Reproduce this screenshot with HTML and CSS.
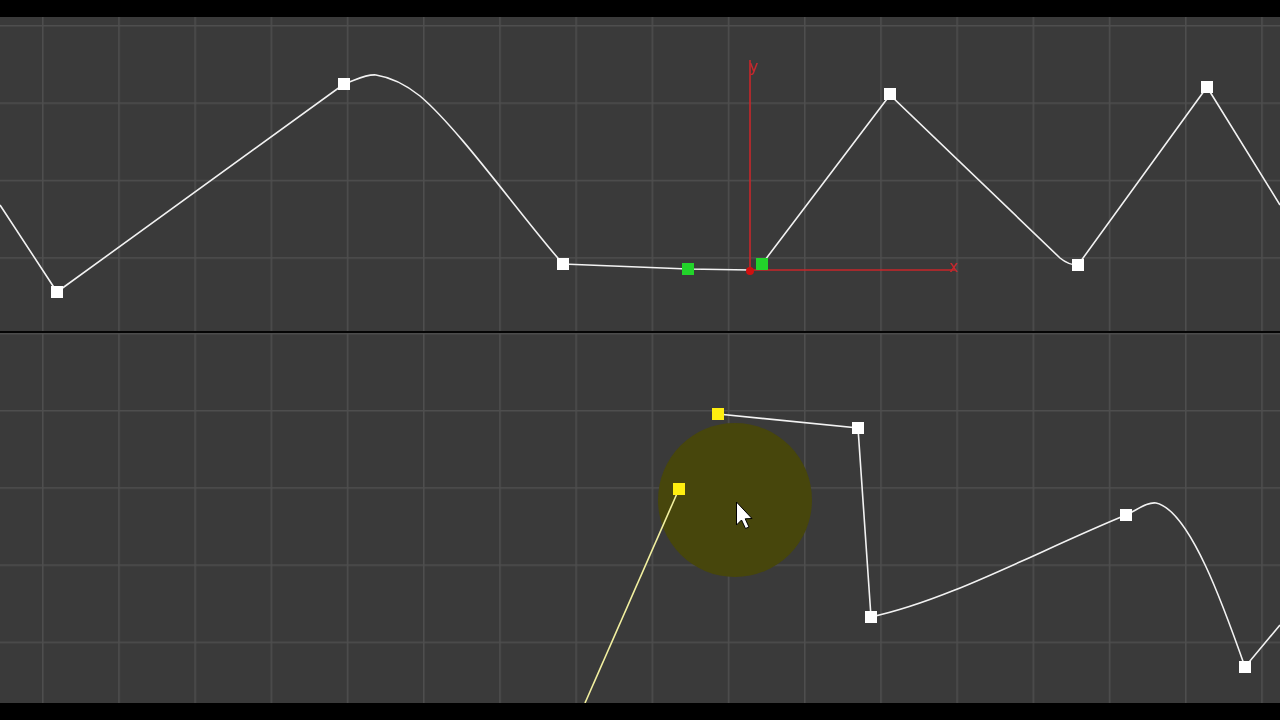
FILE: index.html
```html
<!DOCTYPE html>
<html>
<head>
<meta charset="utf-8">
<link rel="stylesheet" href="styles.css">
</head>
<body>
<div class="screen">
  <div class="bar-top"></div>
  <div class="viewport vp-top">
    <svg class="canvas" width="1280" height="314" viewBox="0 17 1280 314">
      <defs>
        <pattern id="gridA" x="42" y="25" width="76.2" height="77.4" patternUnits="userSpaceOnUse">
          <path d="M0.5 0 V77.4 M0 0.5 H76.2" stroke="#4e4e4e" stroke-width="2" fill="none"/>
        </pattern>
      </defs>
      <rect x="0" y="17" width="1280" height="314" fill="url(#gridA)"/>
      <path class="curve" d="M0 205 L57 292 L344 84 C356 80 366 74 376 75 C395 78 410 88 420 96 C460 130 520 215 563 264 L688 269 L750 270 M762 264 L890 95 L1060 258 C1066 263 1072 265 1078 265 L1207 87 L1280 205"/>
      <line class="axis" x1="750" y1="60" x2="750" y2="270"/>
      <line class="axis" x1="750" y1="270" x2="955" y2="270"/>
      <text class="axis-label" x="749" y="72">y</text>
      <text class="axis-label" x="949" y="272">x</text>
      <circle cx="750" cy="271" r="4" fill="#d01010"/>
      <rect class="key" x="51" y="286" width="12" height="12"/>
      <rect class="key" x="338" y="78" width="12" height="12"/>
      <rect class="key" x="557" y="258" width="12" height="12"/>
      <rect class="key" x="884" y="88" width="12" height="12"/>
      <rect class="key" x="1072" y="259" width="12" height="12"/>
      <rect class="key" x="1201" y="81" width="12" height="12"/>
      <rect class="handle" x="682" y="263" width="12" height="12"/>
      <rect class="handle" x="756" y="258" width="12" height="12"/>
    </svg>
  </div>
  <div class="divider"></div>
  <div class="viewport vp-bottom">
    <svg class="canvas" width="1280" height="370" viewBox="0 333 1280 370">
      <defs>
        <pattern id="gridB" x="42" y="410" width="76.2" height="77.2" patternUnits="userSpaceOnUse">
          <path d="M0.5 0 V77.2 M0 0.5 H76.2" stroke="#4e4e4e" stroke-width="2" fill="none"/>
        </pattern>
      </defs>
      <rect x="0" y="333" width="1280" height="370" fill="url(#gridB)"/>
      <circle cx="735" cy="500" r="77" fill="#47460c"/>
      <path class="curve-yellow" d="M585 703 L679 489"/>
      <path class="curve" d="M718 414 L858 428 L871 617 C950 600 1040 550 1126 515 C1140 508 1148 502 1156 503 C1190 510 1225 610 1245 667 L1280 625"/>
      <rect class="sel" x="712" y="408" width="12" height="12"/>
      <rect class="sel" x="673" y="483" width="12" height="12"/>
      <rect class="key" x="852" y="422" width="12" height="12"/>
      <rect class="key" x="865" y="611" width="12" height="12"/>
      <rect class="key" x="1120" y="509" width="12" height="12"/>
      <rect class="key" x="1239" y="661" width="12" height="12"/>
      <path class="cursor" d="M736.5 502 L736.5 525 L741.5 520 L745.5 528.5 L749 527 L745.2 518.8 L752 518.5 Z"/>
    </svg>
  </div>
  <div class="bar-bottom"></div>
</div>
</body>
</html>
```
FILE: styles.css
```css
html, body {
  margin: 0;
  padding: 0;
  background: #000;
}
.screen {
  width: 1280px;
  height: 720px;
  display: flex;
  flex-direction: column;
  overflow: hidden;
  background: #000;
}
.bar-top {
  height: 17px;
  background: #000;
}
.bar-bottom {
  height: 17px;
  background: #000;
}
.viewport {
  background: #3a3a3a;
}
.vp-top {
  height: 314px;
}
.divider {
  height: 2px;
  background: #050505;
}
.vp-bottom {
  height: 370px;
}
.canvas {
  display: block;
}
.curve {
  fill: none;
  stroke: #f2f2f2;
  stroke-width: 1.6;
}
.curve-yellow {
  fill: none;
  stroke: #f2f0a0;
  stroke-width: 1.6;
}
.axis {
  stroke: #c8262a;
  stroke-width: 1.6;
}
.axis-label {
  fill: #c8262a;
  font-family: "DejaVu Sans", sans-serif;
  font-size: 15px;
}
.key {
  fill: #ffffff;
}
.handle {
  fill: #22d42a;
}
.sel {
  fill: #ffee10;
}
.cursor {
  fill: #ffffff;
  stroke: #000;
  stroke-width: 1;
}
```
